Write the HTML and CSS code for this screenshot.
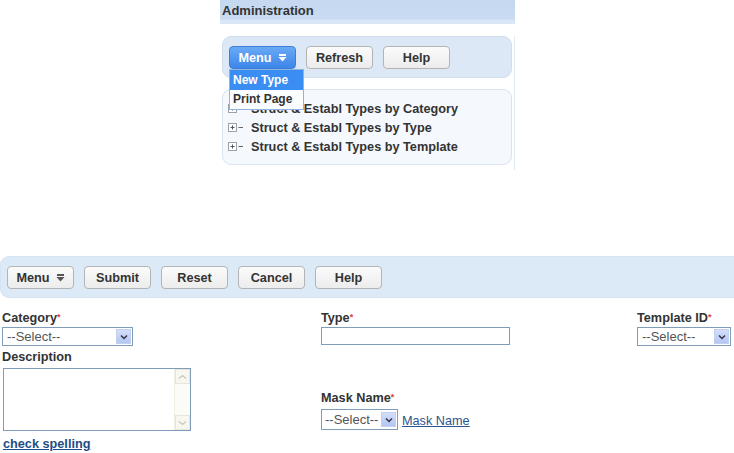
FILE: index.html
```html
<!DOCTYPE html>
<html>
<head>
<meta charset="utf-8">
<link rel="stylesheet" href="styles.css">
</head>
<body>
<div class="admin">
  <div class="adm-header"><span>Administration</span></div>
  <div class="panels">
    <div class="toolbar small">
      <div class="menu-wrap">
        <button class="btn btn-blue">Menu <svg class="dd" width="9" height="8" viewBox="0 0 9 8"><rect x="1" y="0" width="7" height="2" fill="#fff"/><path d="M0.5 3 H8.5 L4.5 7.5 Z" fill="#fff"/></svg></button>
        <div class="dropdown">
          <div class="dd-item active">New Type</div>
          <div class="dd-item">Print Page</div>
        </div>
      </div>
      <button class="btn">Refresh</button>
      <button class="btn">Help</button>
    </div>
    <div class="tree">
      <div class="tree-row"><svg class="plus" width="16" height="9" viewBox="0 0 16 9"><rect x="0.5" y="0.5" width="8" height="8" fill="#fff" stroke="#9aa3ad"/><path d="M2.5 4.5 H6.5 M4.5 2.5 V6.5" stroke="#555" stroke-width="1"/><path d="M10.5 4.5 H15" stroke="#666" stroke-width="1"/></svg><span>Struct &amp; Establ Types by Category</span></div>
      <div class="tree-row"><svg class="plus" width="16" height="9" viewBox="0 0 16 9"><rect x="0.5" y="0.5" width="8" height="8" fill="#fff" stroke="#9aa3ad"/><path d="M2.5 4.5 H6.5 M4.5 2.5 V6.5" stroke="#555" stroke-width="1"/><path d="M10.5 4.5 H15" stroke="#666" stroke-width="1"/></svg><span>Struct &amp; Establ Types by Type</span></div>
      <div class="tree-row"><svg class="plus" width="16" height="9" viewBox="0 0 16 9"><rect x="0.5" y="0.5" width="8" height="8" fill="#fff" stroke="#9aa3ad"/><path d="M2.5 4.5 H6.5 M4.5 2.5 V6.5" stroke="#555" stroke-width="1"/><path d="M10.5 4.5 H15" stroke="#666" stroke-width="1"/></svg><span>Struct &amp; Establ Types by Template</span></div>
    </div>
  </div>
</div>

<div class="toolbar wide">
  <button class="btn">Menu <svg class="dd" width="9" height="8" viewBox="0 0 9 8"><rect x="1" y="0" width="7" height="2" fill="#555"/><path d="M0.5 3 H8.5 L4.5 7.5 Z" fill="#555"/></svg></button>
  <button class="btn">Submit</button>
  <button class="btn">Reset</button>
  <button class="btn">Cancel</button>
  <button class="btn">Help</button>
</div>

<div class="form">
  <div class="col">
    <div class="label">Category<span class="req">*</span></div>
    <div class="select cat"><span>--Select--</span><span class="arrow"><svg width="8" height="6" viewBox="0 0 8 6"><path d="M1 1.5 L4 4.5 L7 1.5" fill="none" stroke="#334" stroke-width="1.5"/></svg></span></div>
    <div class="label desc">Description</div>
    <div class="textarea">
      <div class="scroll">
        <div class="sbtn"><svg width="9" height="6" viewBox="0 0 9 6"><path d="M1 4.5 L4.5 1.5 L8 4.5" fill="none" stroke="#c8c8b8" stroke-width="1.3"/></svg></div>
        <div class="sbtn"><svg width="9" height="6" viewBox="0 0 9 6"><path d="M1 1.5 L4.5 4.5 L8 1.5" fill="none" stroke="#c8c8b8" stroke-width="1.3"/></svg></div>
      </div>
    </div>
    <a class="spell" href="#">check spelling</a>
  </div>
  <div class="col">
    <div class="label">Type<span class="req">*</span></div>
    <div class="input"></div>
    <div class="label mask">Mask Name<span class="req">*</span></div>
    <div class="mask-row">
      <div class="select small-sel"><span>--Select--</span><span class="arrow"><svg width="8" height="6" viewBox="0 0 8 6"><path d="M1 1.5 L4 4.5 L7 1.5" fill="none" stroke="#334" stroke-width="1.5"/></svg></span></div>
      <a class="mask-link" href="#">Mask Name</a>
    </div>
  </div>
  <div class="col">
    <div class="label">Template ID<span class="req">*</span></div>
    <div class="select tpl"><span>--Select--</span><span class="arrow"><svg width="8" height="6" viewBox="0 0 8 6"><path d="M1 1.5 L4 4.5 L7 1.5" fill="none" stroke="#334" stroke-width="1.5"/></svg></span></div>
  </div>
</div>
</body>
</html>
```
FILE: styles.css
```css
* { box-sizing: border-box; }
body {
  margin: 0;
  font-family: "Liberation Sans", Arial, sans-serif;
  font-size: 12.7px;
  color: #333;
  background: #fff;
  width: 734px;
  height: 453px;
  overflow: hidden;
}
.admin {
  margin-left: 220px;
  width: 295px;
}
.adm-header {
  height: 24px;
  background: linear-gradient(#c4d8f0 0, #c8dbf1 19px, #d9e6f5 20px, #dae6f5 24px);
  padding-left: 2px;
  font-weight: bold;
  font-size: 13px;
  line-height: 21px;
  color: #333;
}
.panels {
  margin-top: 12px;
  padding-left: 2px;
  padding-right: 2px;
  border-right: 1px solid #e2eaf2;
  padding-bottom: 5px;
}
.toolbar {
  display: flex;
  gap: 10px;
  background: #dce8f5;
  border: 1px solid #cfdded;
  height: 42px;
  padding: 9px 6px;
}
.toolbar.small {
  border-radius: 9px;
  width: 290px;
}
.toolbar.wide {
  margin-top: 86px;
  width: 740px;
  border-radius: 9px 0 0 9px;
  border-right: none;
  background: #dce9f6;
  border-color: #d6e3f1;
}
.btn {
  width: 67px;
  height: 23px;
  border: 1px solid #b4b4b4;
  border-radius: 4px;
  background: linear-gradient(#fbfbfb, #ececec);
  font-family: "Liberation Sans", Arial, sans-serif;
  font-size: 12.7px;
  font-weight: bold;
  color: #333;
  padding: 0;
  display: flex;
  align-items: center;
  justify-content: center;
  gap: 6px;
  flex: none;
}
.btn-blue {
  background: linear-gradient(#6aaaf5, #3c86ea);
  border-color: #3c7fd6;
  color: #fff;
}
.menu-wrap {
  position: relative;
}
.dropdown {
  position: absolute;
  left: 0;
  top: 23px;
  width: 75px;
  border: 1px solid #8fb3de;
  background: #fff;
  z-index: 5;
}
.dd-item {
  height: 19px;
  line-height: 19px;
  padding-left: 3px;
  font-size: 12px;
  font-weight: bold;
  color: #333;
  background: #fbfcfe;
}
.dd-item.active {
  background: #3a8df2;
  color: #fff;
  height: 20px;
  line-height: 20px;
}
.tree {
  margin-top: 11px;
  width: 290px;
  height: 76px;
  background: #f5f8fc;
  border: 1px solid #d8e4f0;
  border-radius: 9px;
  padding: 9px 0 0 5px;
}
.tree-row {
  height: 19px;
  display: flex;
  align-items: center;
  font-weight: bold;
  color: #333;
}
.plus {
  margin-right: 7px;
  flex: none;
}
.form {
  display: grid;
  grid-template-columns: 319px 316px 1fr;
  padding: 12px 0 0 2px;
}
.col {
  display: flex;
  flex-direction: column;
  align-items: flex-start;
}
.label {
  font-weight: bold;
  line-height: 17px;
  height: 17px;
}
.req {
  color: #e03a3a;
  font-size: 9px;
  vertical-align: top;
  position: relative;
  top: -1px;
}
.select {
  height: 19px;
  border: 1px solid #7f9db9;
  background: #fff;
  display: flex;
  align-items: center;
  justify-content: space-between;
  padding: 1px 1px 1px 4px;
  font-size: 13px;
  color: #555;
}
.select .arrow {
  width: 15px;
  height: 15px;
  background: linear-gradient(#d3defa, #b3c6f3);
  border: 1px solid #c3d1ef;
  display: flex;
  align-items: center;
  justify-content: center;
  flex: none;
}
.select.cat { width: 131px; }
.select.tpl { width: 94px; }
.select.small-sel { width: 77px; height: 21px; padding-left: 3px; }
.label.desc { margin-top: 3px; height: 18px; }
.textarea {
  margin-top: 1px;
  margin-left: 1px;
  width: 188px;
  height: 63px;
  border: 1px solid #7f9db9;
  background: #fff;
  display: flex;
  justify-content: flex-end;
}
.scroll {
  width: 16px;
  height: 100%;
  background: #fcfcf7;
  border-left: 1px solid #eeeee4;
  display: flex;
  flex-direction: column;
  justify-content: space-between;
}
.sbtn {
  height: 15px;
  background: #f7f7f0;
  border: 1px solid #e6e6da;
  display: flex;
  align-items: center;
  justify-content: center;
}
.spell {
  margin-top: 6px;
  margin-left: 1px;
  font-weight: bold;
  color: #1d4d84;
  text-decoration: underline;
  line-height: 15px;
}
.input {
  width: 189px;
  height: 18px;
  border: 1px solid #7f9db9;
  background: #fff;
}
.label.mask {
  margin-top: 45px;
}
.mask-row {
  margin-top: 2px;
  display: flex;
  align-items: center;
  gap: 4px;
}
.mask-link {
  color: #2a5591;
  text-decoration: underline;
  margin-top: 2px;
}
```
